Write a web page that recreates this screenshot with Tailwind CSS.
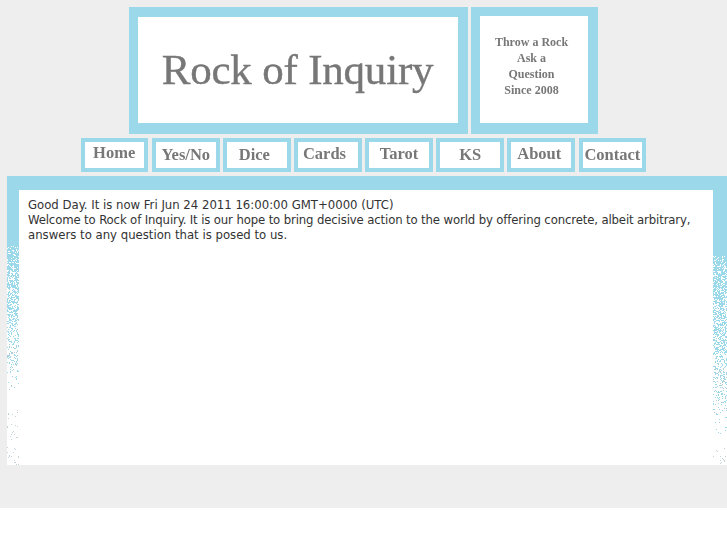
<!DOCTYPE html>
<html lang="en">
<head>
  <meta charset="UTF-8" />
  <title>Rock of Inquiry</title>
  <script src="https://cdn.jsdelivr.net/npm/@tailwindcss/browser@4"></script>
</head>
<body class="bg-white font-['DejaVu_Sans_Condensed','DejaVu_Sans',sans-serif] font-stretch-condensed">

  <div class="bg-[#eeeeee] h-[508px] pt-[7px]">

    <!-- Banner -->
    <div class="flex justify-center gap-[3px] font-['Liberation_Serif',serif] text-[#777777]">
      <div class="w-[339px] h-[127px] bg-[#9bd9ea] pt-[10px] pl-[9px]">
        <div class="w-[320px] h-[106px] bg-white flex items-center justify-center pb-[2px] pr-[1px]">
          <span class="text-[43px] leading-none tracking-[-0.2px] [-webkit-text-stroke:0.4px_#777777] blur-[0.3px]">Rock of Inquiry</span>
        </div>
      </div>
      <div class="w-[127px] h-[127px] bg-[#9bd9ea] pt-[9px] pl-[9px]">
        <div class="w-[108px] h-[107px] bg-white flex flex-col items-center justify-center pb-[8px] pr-[5px] text-[12px] leading-[16px] font-bold blur-[0.3px]">
          <span>Throw a Rock</span>
          <span>Ask a</span>
          <span>Question</span>
          <span>Since 2008</span>
        </div>
      </div>
    </div>

    <!-- Nav -->
    <nav class="flex justify-center gap-[3.5px] mt-[4px] font-['Liberation_Serif',serif] font-bold text-[#777777] text-[16.5px]">
      <a class="w-[67.6px] h-[34px] border-[4px] border-[#9bd9ea] bg-white flex items-center justify-center pb-[3px] pr-[1px]"><span class="blur-[0.3px]">Home</span></a>
      <a class="w-[67.6px] h-[34px] border-[4px] border-[#9bd9ea] bg-white flex items-center justify-center"><span class="blur-[0.3px]">Yes/No</span></a>
      <a class="w-[67.6px] h-[34px] border-[4px] border-[#9bd9ea] bg-white flex items-center justify-center pr-[5px]"><span class="blur-[0.3px]">Dice</span></a>
      <a class="w-[67.6px] h-[34px] border-[4px] border-[#9bd9ea] bg-white flex items-center justify-center pr-[7px] pb-[1px]"><span class="blur-[0.3px]">Cards</span></a>
      <a class="w-[67.6px] h-[34px] border-[4px] border-[#9bd9ea] bg-white flex items-center justify-center pb-[1px]"><span class="blur-[0.3px]">Tarot</span></a>
      <a class="w-[67.6px] h-[34px] border-[4px] border-[#9bd9ea] bg-white flex items-center justify-center"><span class="blur-[0.3px]">KS</span></a>
      <a class="w-[67.6px] h-[34px] border-[4px] border-[#9bd9ea] bg-white flex items-center justify-center pb-[1px] pr-[4px]"><span class="blur-[0.3px]">About</span></a>
      <a class="w-[67.6px] h-[34px] border-[4px] border-[#9bd9ea] bg-white flex items-center justify-center"><span class="blur-[0.3px]">Contact</span></a>
    </nav>

    <!-- Content panel -->
    <div class="ml-[7px] mt-[4px] h-[289px] flex flex-col">
      <div class="h-[14px] bg-[#9bd9ea]"></div>
      <div class="flex flex-1">
        <canvas id="edgeLeft" width="12" height="275" class="w-[12px] h-[275px] blur-[0.4px]"></canvas>
        <div class="flex-1 bg-white pt-[7px] pl-[9px] pr-[20px] text-[13px] leading-[15px] text-[#333333]">
          <p>Good Day. It is now Fri Jun 24 2011 16:00:00 GMT+0000 (UTC)</p>
          <p><span class="tracking-[-0.13px]">Welcome to Rock of Inquiry. It is our hope to bring decisive action to the world by offering concrete, albeit arbitrary,</span> answers to any question that is posed to us.</p>
        </div>
        <canvas id="edgeRight" width="14" height="275" class="w-[14px] h-[275px] blur-[0.4px]"></canvas>
      </div>
    </div>
  </div>

  <script>
    // speckled fade on the panel's side edges
    let seed = 7;
    function rnd() {
      seed = (seed * 16807) % 2147483647;
      return seed / 2147483647;
    }

    function speckle(id, start, end) {
      const c = document.getElementById(id);
      const ctx = c.getContext('2d');
      ctx.fillStyle = '#ffffff';
      ctx.fillRect(0, 0, c.width, c.height);
      for (let y = 0; y < c.height; y++) {
        const t = (y - start) / (end - start);
        const p = t <= 0 ? 1 : Math.max(0, 0.8 - t);
        for (let x = 0; x < c.width; x++) {
          if (rnd() < p) {
            ctx.fillStyle = t > 0.5 && rnd() < 0.3 ? '#b4ccd4' : '#9bd9ea';
            ctx.fillRect(x, y, 1, 1);
          } else if (t > 0.85 && t < 1.25 && rnd() < 0.05) {
            ctx.fillStyle = '#c4d4da';
            ctx.fillRect(x, y, 1, 1);
          }
        }
      }
    }

    speckle('edgeLeft', 55, 245);
    speckle('edgeRight', 65, 290);
  </script>
</body>
</html>
